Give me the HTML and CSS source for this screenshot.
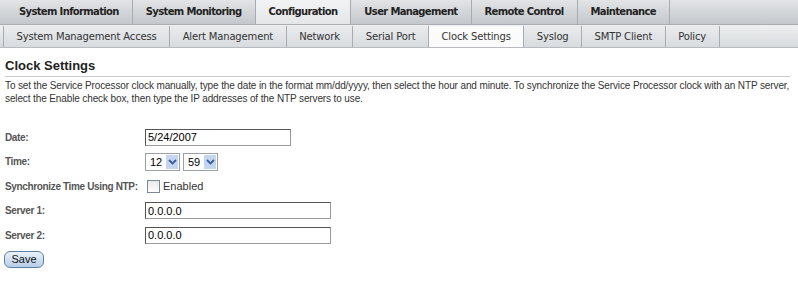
FILE: index.html
```html
<!DOCTYPE html>
<html lang="en">
<head>
  <meta charset="UTF-8">
  <title>Clock Settings</title>
  <link rel="stylesheet" href="styles.css">
</head>
<body>
  <div class="tabs main-tabs">
    <span class="tab">System Information</span>
    <span class="tab">System Monitoring</span>
    <span class="tab active">Configuration</span>
    <span class="tab">User Management</span>
    <span class="tab">Remote Control</span>
    <span class="tab">Maintenance</span>
  </div>
  <div class="tabs sub-tabs">
    <span class="tab">System Management Access</span>
    <span class="tab">Alert Management</span>
    <span class="tab">Network</span>
    <span class="tab">Serial Port</span>
    <span class="tab active">Clock Settings</span>
    <span class="tab">Syslog</span>
    <span class="tab">SMTP Client</span>
    <span class="tab">Policy</span>
  </div>

  <div class="content">
    <h1>Clock Settings</h1>
    <p class="intro">To set the Service Processor clock manually, type the date in the format mm/dd/yyyy, then select the hour and minute. To synchronize the Service Processor clock with an NTP server, select the Enable check box, then type the IP addresses of the NTP servers to use.</p>

    <form class="settings">
      <div class="row">
        <label>Date:</label>
        <input type="text" class="field date" value="5/24/2007">
      </div>
      <div class="row">
        <label>Time:</label>
        <span class="select">12 <i class="arrow"><svg width="9" height="6" viewBox="0 0 9 6"><path d="M1 1 L4.5 4.5 L8 1" fill="none" stroke="#3a5f9e" stroke-width="1.8"/></svg></i></span>
        <span class="select">59 <i class="arrow"><svg width="9" height="6" viewBox="0 0 9 6"><path d="M1 1 L4.5 4.5 L8 1" fill="none" stroke="#3a5f9e" stroke-width="1.8"/></svg></i></span>
      </div>
      <div class="row">
        <label>Synchronize Time Using NTP:</label>
        <span class="check"><span class="box"></span>Enabled</span>
      </div>
      <div class="row">
        <label>Server 1:</label>
        <input type="text" class="field server" value="0.0.0.0">
      </div>
      <div class="row">
        <label>Server 2:</label>
        <input type="text" class="field server" value="0.0.0.0">
      </div>
      <button type="button" class="save">Save</button>
    </form>
  </div>
</body>
</html>
```

FILE: styles.css
```css
body {
  margin: 0;
  font-family: 'Liberation Sans', Arial, sans-serif;
  background: #fff;
  color: #333;
}

.tabs {
  display: flex;
  padding-left: 3px;
}

.main-tabs {
  height: 24px;
  background: linear-gradient(#e2e4e6, #c4c8cc);
  border-bottom: 1px solid #a9adb2;
}

.main-tabs .tab {
  font-family: 'DejaVu Sans', Verdana, sans-serif;
  font-weight: bold;
  font-size: 10px;
  letter-spacing: -0.65px;
  color: #222;
  line-height: 24px;
  padding: 0 13px;
  border-right: 1px solid #a8acb0;
}

.main-tabs .tab:first-child {
  padding-left: 16px;
}

.main-tabs .tab.active {
  background: linear-gradient(#f2f3f4, #e4e6e8);
}

.sub-tabs {
  height: 22px;
  background: linear-gradient(#eef0f1, #d7dadd);
  border-bottom: 1px solid #b8bcc0;
}

.sub-tabs .tab {
  font-family: 'DejaVu Sans', Verdana, sans-serif;
  font-size: 10px;
  letter-spacing: -0.15px;
  color: #333;
  line-height: 21px;
  padding: 0 12.5px;
  margin-top: 1px;
  border-left: 1px solid #a8acb0;
  background: linear-gradient(#e9ebed, #d9dcdf);
}

.sub-tabs .tab:last-child {
  border-right: 1px solid #a8acb0;
}

.sub-tabs .tab.active {
  background: #fbfbfb;
}

.content {
  padding: 0 8px 0 5px;
}

h1 {
  font-size: 13px;
  color: #222;
  margin: 10px 0 0;
  padding-bottom: 3px;
  border-bottom: 1px solid #c8ccd0;
}

.intro {
  font-size: 10px;
  line-height: 13px;
  margin: 2px 0 0;
  letter-spacing: -0.12px;
}

.settings {
  margin-top: 20px;
}

.row {
  display: flex;
  align-items: center;
  height: 24.5px;
}

.row label {
  width: 140px;
  white-space: nowrap;
  font-size: 10px;
  font-weight: bold;
  letter-spacing: -0.35px;
  color: #555;
}

.field {
  box-sizing: border-box;
  height: 17px;
  border: 1px solid #9a9a9a;
  border-top-color: #555;
  border-left-color: #555;
  font-family: 'Liberation Sans', Arial, sans-serif;
  font-size: 11px;
  padding: 0 2px;
  color: #000;
}

.date {
  width: 146px;
}

.server {
  width: 186px;
}

.select {
  display: inline-flex;
  align-items: center;
  justify-content: space-between;
  box-sizing: border-box;
  width: 35px;
  height: 18px;
  border: 1px solid #9aa0a6;
  font-size: 11px;
  padding: 0 1px 0 4px;
  margin-right: 3px;
  color: #000;
}

.arrow {
  display: flex;
  align-items: center;
  justify-content: center;
  width: 12px;
  height: 14px;
  background: #c5d5ef;
}

.check {
  display: flex;
  align-items: center;
  font-size: 11px;
  color: #333;
}

.box {
  width: 11px;
  height: 11px;
  border: 1px solid #7a8a99;
  background: linear-gradient(#e6e8ea, #fff);
  margin: 0 3px 0 2px;
}

.save {
  margin-top: 3px;
  width: 40px;
  height: 17px;
  font-family: 'Liberation Sans', Arial, sans-serif;
  font-size: 11px;
  color: #111;
  border: 1px solid #5e7fa8;
  border-radius: 6px;
  background: linear-gradient(#eaf2fb, #b7cde6);
  padding: 0;
  margin-left: -1px;
}
```
